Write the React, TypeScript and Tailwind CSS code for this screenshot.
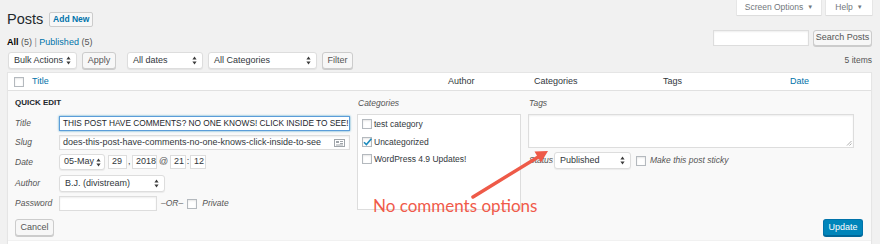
import React from "react";
import clsx from "clsx";

function UpDown() {
  return (
    <svg width="5" height="9" viewBox="0 0 5 9" className="shrink-0">
      <path d="M2.5 0.6 L4.6 3.6 H0.4 Z M2.5 8.4 L4.6 5.4 H0.4 Z" fill="#3c3c3c" />
    </svg>
  );
}

function Select({ label, className }: { label: string; className: string }) {
  return (
    <div
      className={clsx(
        "flex items-center justify-between bg-white border border-[#ddd] rounded-[3px] shadow-[0_1px_1px_rgba(0,0,0,0.06)] text-[9px] text-[#32373c] whitespace-nowrap",
        className
      )}
    >
      <span>{label}</span>
      <UpDown />
    </div>
  );
}

function Button({ label, className }: { label: string; className: string }) {
  return (
    <div
      className={clsx(
        "flex items-center justify-center bg-[#f7f7f7] border border-[#ccc] rounded-[3px] shadow-[0_1px_0_#ccc] text-[#555] text-[9px]",
        className
      )}
    >
      {label}
    </div>
  );
}

function Checkbox({ checked = false }: { checked?: boolean }) {
  return (
    <div className="relative w-[10px] h-[10px] shrink-0 bg-white border border-[#b4b9be] shadow-[inset_0_1px_2px_rgba(0,0,0,0.1)]">
      {checked && (
        <svg width="11" height="10" viewBox="0 0 11 10" className="absolute left-[-1px] top-[-1px]">
          <path d="M2 5.2 L4.4 7.6 L9.4 1.8" stroke="#1e8cbe" strokeWidth="1.6" fill="none" />
        </svg>
      )}
    </div>
  );
}

function Field({ label, children, h }: { label: string; children: React.ReactNode; h: string }) {
  return (
    <div className={clsx("flex items-center", h)}>
      <span className="w-[44px] shrink-0 italic text-[8.5px] text-[#555]">{label}</span>
      {children}
    </div>
  );
}

function Tab({ label, className }: { label: string; className: string }) {
  return (
    <div
      className={clsx(
        "flex items-center justify-center gap-[4px] h-[15px] bg-white shadow-[0_0_0_1px_rgba(0,0,0,0.04),0_1px_1px_rgba(0,0,0,0.04)] text-[8.5px] text-[#72777c]",
        className
      )}
    >
      {label}
      <span className="text-[6px]">▼</span>
    </div>
  );
}

export default function App() {
  return (
    <div className="relative w-[880px] h-[244px] overflow-hidden bg-[#f1f1f1] font-['Liberation_Sans',Arial,sans-serif] text-[#23282d] text-[9px]">
      <div className="pl-[7px] pr-[8px]">
        {/* Heading and screen meta tabs */}
        <div className="flex justify-between h-[30px]">
          <div className="flex items-center gap-[6px] h-[15px] mt-[12px]">
            <h1 className="text-[14.5px] leading-none text-[#23282d]">Posts</h1>
            <span className="flex items-center justify-center w-[44px] h-[15px] bg-[#f7f7f7] border border-[#ccc] rounded-[2px] text-[8.5px] font-bold text-[#0073aa]">
              Add New
            </span>
          </div>
          <div className="flex gap-[5px]">
            <Tab label="Screen Options" className="w-[84px]" />
            <Tab label="Help" className="w-[46px]" />
          </div>
        </div>

        {/* Views + search */}
        <div className="flex justify-between items-end h-[16px]">
          <div className="leading-none mb-[-1px] whitespace-pre">
            <span className="font-bold text-[#000]">All</span>
            <span className="text-[#555]"> (5)</span>
            <span className="text-[#999]"> | </span>
            <span className="text-[#0073aa]">Published </span>
            <span className="text-[#555]">(5)</span>
          </div>
          <div className="flex gap-[4px] h-[16px]">
            <div className="w-[96px] h-[16px] bg-white border border-[#ddd] shadow-[inset_0_1px_2px_rgba(0,0,0,0.07)]" />
            <Button label="Search Posts" className="w-[59px] h-[16px]" />
          </div>
        </div>

        {/* Bulk actions */}
        <div className="flex justify-between items-center h-[17px] mt-[6px]">
          <div className="flex items-center h-[17px] pl-[1px]">
            <Select label="Bulk Actions" className="w-[69px] h-[17px] px-[5px]" />
            <Button label="Apply" className="w-[34px] h-[17px] ml-[5px]" />
            <Select label="All dates" className="w-[76px] h-[17px] ml-[11px] px-[5px]" />
            <Select label="All Categories" className="w-[109px] h-[17px] ml-[5px] px-[5px]" />
            <Button label="Filter" className="w-[31px] h-[17px] ml-[5px]" />
          </div>
          <span className="text-[8.5px] text-[#555]">5 items</span>
        </div>

        {/* Table */}
        <div className="mt-[3px] border border-[#e5e5e5] bg-white shadow-[0_1px_1px_rgba(0,0,0,0.04)]">
          <div className="flex items-center h-[18px] border-b border-[#e1e1e1] text-[9px] text-[#32373c]">
            <div className="w-[24px] pl-[6px]">
              <Checkbox />
            </div>
            <span className="w-[416px] text-[#0073aa]">Title</span>
            <span className="w-[86px]">Author</span>
            <span className="w-[129px]">Categories</span>
            <span className="w-[127px]">Tags</span>
            <span className="text-[#0073aa]">Date</span>
          </div>

          {/* Quick edit */}
          <div className="flex flex-col h-[149px] bg-[#f9f9f9] pt-[7px] pl-[7px] pr-[8px]">
            <div className="flex gap-[7px]">
              {/* left column */}
              <div className="w-[335px]">
                <div className="h-[10px] leading-[10px] text-[8px] font-bold uppercase text-[#23282d]">Quick Edit</div>
                <div className="flex flex-col gap-[4px] mt-[8px]">
                  <Field label="Title" h="h-[15px]">
                    <div className="flex items-center flex-1 h-[15px] bg-white border border-[#5b9dd9] shadow-[0_0_2px_rgba(30,140,190,0.8)] pl-[3px] text-[8.3px] text-[#23282d] whitespace-nowrap overflow-hidden">
                      THIS POST HAVE COMMENTS? NO ONE KNOWS! CLICK INSIDE TO SEE!
                    </div>
                  </Field>
                  <Field label="Slug" h="h-[15px]">
                    <div className="flex items-center justify-between flex-1 h-[15px] bg-white border border-[#ddd] shadow-[inset_0_1px_2px_rgba(0,0,0,0.07)] pl-[3px] pr-[4px] text-[9px] text-[#32373c] whitespace-nowrap">
                      <span>does-this-post-have-comments-no-one-knows-click-inside-to-see</span>
                      <svg width="11" height="8" viewBox="0 0 11 8">
                        <rect x="0.5" y="0.5" width="10" height="7" fill="none" stroke="#a0a5aa" />
                        <rect x="2" y="2" width="3" height="2" fill="#a0a5aa" />
                        <path d="M6 2.5 H9 M6 4.5 H9 M2 6 H9" stroke="#a0a5aa" strokeWidth="1" />
                      </svg>
                    </div>
                  </Field>
                  <Field label="Date" h="h-[16px]">
                    <div className="flex items-center text-[9px] text-[#32373c]">
                      <Select label="05-May" className="w-[46px] h-[16px] pl-[4px] pr-[3px]" />
                      <div className="flex items-center w-[19px] h-[14px] ml-[3px] bg-white border border-[#ddd] pl-[3px]">29</div>
                      <span className="w-[4px] ml-[1px]">,</span>
                      <div className="flex items-center w-[25px] h-[14px] bg-white border border-[#ddd] pl-[3px]">2018</div>
                      <span className="w-[13px] text-center text-[#555]">@</span>
                      <div className="flex items-center w-[16px] h-[14px] bg-white border border-[#ddd] pl-[3px]">21</div>
                      <span className="w-[4px] text-center">:</span>
                      <div className="flex items-center w-[16px] h-[14px] bg-white border border-[#ddd] pl-[3px]">12</div>
                    </div>
                  </Field>
                  <div className="h-[1px]" />
                  <Field label="Author" h="h-[17px] mt-[-4px]">
                    <Select label="B.J. (divistream)" className="w-[106px] h-[17px] px-[5px]" />
                  </Field>
                  <Field label="Password" h="h-[15px]">
                    <div className="w-[98px] h-[15px] bg-white border border-[#ddd] shadow-[inset_0_1px_2px_rgba(0,0,0,0.07)]" />
                    <span className="ml-[4px] italic text-[8.5px] text-[#555]">–OR–</span>
                    <div className="ml-[4px]">
                      <Checkbox />
                    </div>
                    <span className="ml-[5px] italic text-[8.5px] text-[#555]">Private</span>
                  </Field>
                </div>
              </div>

              {/* categories column */}
              <div className="w-[164px]">
                <div className="h-[10px] leading-[10px] pl-[1px] italic text-[8.5px] text-[#555]">Categories</div>
                <div className="flex flex-col gap-[7px] mt-[6px] h-[96px] bg-white border border-[#ddd] pt-[4px] pl-[4px] text-[8.5px] text-[#32373c]">
                  <div className="flex items-center gap-[2px] h-[10px]">
                    <Checkbox />
                    <span>test category</span>
                  </div>
                  <div className="flex items-center gap-[2px] h-[10px] mt-[1px]">
                    <Checkbox checked />
                    <span>Uncategorized</span>
                  </div>
                  <div className="flex items-center gap-[2px] h-[10px]">
                    <Checkbox />
                    <span>WordPress 4.9 Updates!</span>
                  </div>
                </div>
              </div>

              {/* tags column */}
              <div className="flex-1">
                <div className="h-[10px] leading-[10px] pl-[1px] italic text-[8.5px] text-[#555]">Tags</div>
                <div className="relative w-[326px] h-[34px] mt-[6px] bg-white border border-[#ddd] shadow-[inset_0_1px_2px_rgba(0,0,0,0.07)]">
                  <svg width="6" height="6" viewBox="0 0 6 6" className="absolute right-[1px] bottom-[1px]">
                    <path d="M5.5 1 L1 5.5 M5.5 3.5 L3.5 5.5" stroke="#999" strokeWidth="0.8" />
                  </svg>
                </div>
                <div className="flex items-center h-[17px] mt-[4px]">
                  <span className="w-[26px] pl-[1px] italic text-[8.5px] text-[#555]">Status</span>
                  <Select label="Published" className="w-[77px] h-[17px] px-[5px]" />
                  <div className="ml-[5px]">
                    <Checkbox />
                  </div>
                  <span className="ml-[4px] italic text-[8.5px] text-[#555]">Make this post sticky</span>
                </div>
              </div>
            </div>

            {/* actions */}
            <div className="flex justify-between items-center h-[17px] mt-auto mb-[4px]">
              <Button label="Cancel" className="w-[39px] h-[17px]" />
              <div className="flex items-center justify-center w-[40px] h-[17px] bg-[#0085ba] border border-[#0073aa] border-b-[#006799] rounded-[3px] shadow-[0_1px_0_#006799] text-[9px] text-white">
                Update
              </div>
            </div>
          </div>
          <div className="h-[10px] bg-white border-t border-[#f1f1f1]" />
        </div>
      </div>

      {/* annotation */}
      <svg width="880" height="244" className="absolute left-0 top-0 pointer-events-none">
        <line x1="473" y1="197" x2="539" y2="156.5" stroke="#ee5a48" strokeWidth="3.5" strokeLinecap="round" />
        <polygon points="548,151 534.5,151.5 541,162.5" fill="#ee5a48" />
      </svg>
      <span className="absolute left-[373px] top-[197px] text-[17px] leading-none text-[#f05a4a] font-['Lato',sans-serif]">
        No comments options
      </span>
    </div>
  );
}
